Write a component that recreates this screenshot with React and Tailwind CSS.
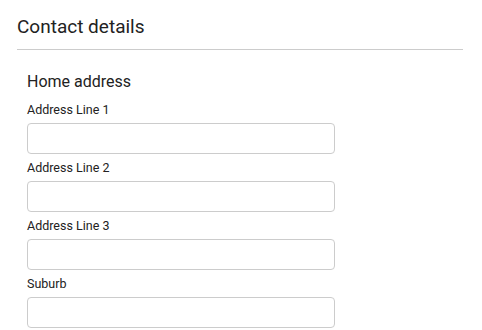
export default function App() {
  const fields = ['Address Line 1', 'Address Line 2', 'Address Line 3', 'Suburb'];
  return (
    <div className="min-h-[330px] w-[482px] bg-white font-['Roboto',sans-serif] text-[#222]">
      <div className="pl-[17px] pr-[19px] pt-[15px]">
        <h2 className="border-b border-[#ccc] pb-[10px] text-[19px] font-normal leading-[24px]">Contact details</h2>
        <div className="px-[10px] pt-[22px]">
          <h3 className="text-[16px] font-normal leading-[20px]">Home address</h3>
          <div className="mt-[10px] flex flex-col gap-[6px]">
            {fields.map(f => (
              <div key={f} className="flex flex-col">
                <label className="text-[12.5px] font-normal leading-[16px]">{f}</label>
                <input type="text" className="mt-[5px] h-[31px] w-[308px] rounded border border-[#ccc] bg-white px-2 text-[13px] outline-none" />
              </div>
            ))}
          </div>
        </div>
      </div>
    </div>
  );
}
